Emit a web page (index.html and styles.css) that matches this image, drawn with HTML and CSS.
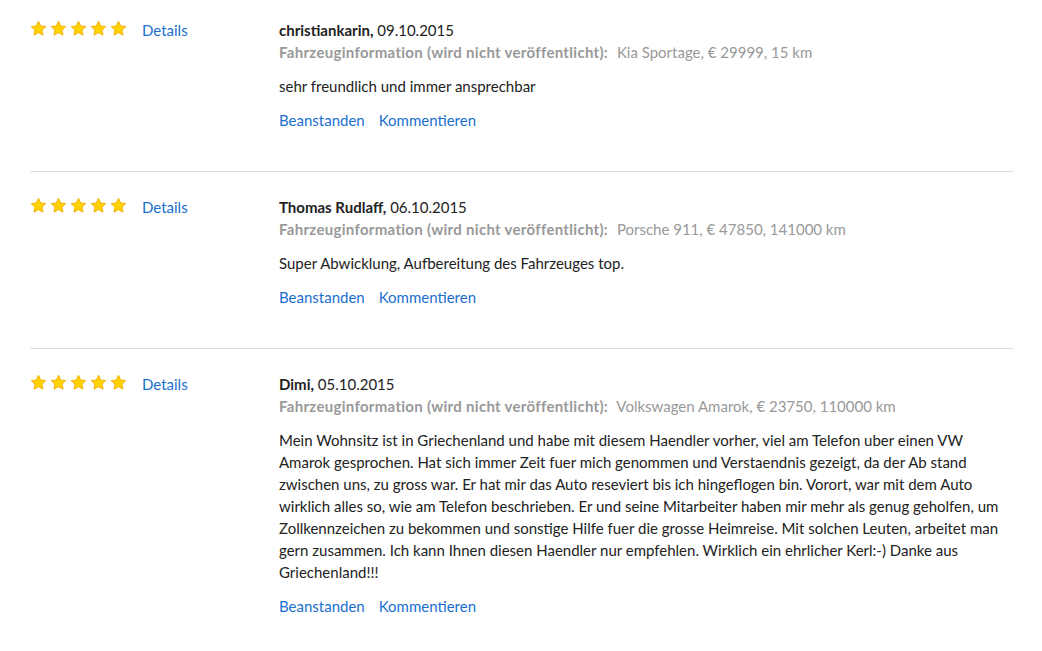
FILE: index.html
```html
<!DOCTYPE html>
<html>
<head>
  <title>Bewertungen</title>
  <meta charset="UTF-8">
  <link rel="stylesheet" href="styles.css">
</head>
<body>
  <svg width="0" height="0" class="defs">
    <symbol id="star" viewBox="0 0 24 24">
      <path d="M12 1.8l3.1 6.6 7.2.9-5.3 5 1.4 7.1L12 17.9l-6.4 3.5 1.4-7.1-5.3-5 7.2-.9z" fill="#ffd200" stroke="#f2a900" stroke-width="1.2" stroke-linejoin="round"/>
    </symbol>
  </svg>
  <div class="reviews">

    <div class="review">
      <div class="review-side">
        <div class="stars">
          <svg><use href="#star"/></svg><svg><use href="#star"/></svg><svg><use href="#star"/></svg><svg><use href="#star"/></svg><svg><use href="#star"/></svg>
        </div>
        <a href="#" class="details">Details</a>
      </div>
      <div class="review-body">
        <div class="author"><b>christiankarin,</b> 09.10.2015</div>
        <div class="vehicle"><b>Fahrzeuginformation (wird nicht veröffentlicht):</b> Kia Sportage, € 29999, 15 km</div>
        <p class="text">sehr freundlich und immer ansprechbar</p>
        <div class="actions"><a href="#">Beanstanden</a><a href="#">Kommentieren</a></div>
      </div>
    </div>

    <div class="review">
      <div class="review-side">
        <div class="stars">
          <svg><use href="#star"/></svg><svg><use href="#star"/></svg><svg><use href="#star"/></svg><svg><use href="#star"/></svg><svg><use href="#star"/></svg>
        </div>
        <a href="#" class="details">Details</a>
      </div>
      <div class="review-body">
        <div class="author"><b>Thomas Rudlaff,</b> 06.10.2015</div>
        <div class="vehicle"><b>Fahrzeuginformation (wird nicht veröffentlicht):</b> Porsche 911, € 47850, 141000 km</div>
        <p class="text">Super Abwicklung, Aufbereitung des Fahrzeuges top.</p>
        <div class="actions"><a href="#">Beanstanden</a><a href="#">Kommentieren</a></div>
      </div>
    </div>

    <div class="review">
      <div class="review-side">
        <div class="stars">
          <svg><use href="#star"/></svg><svg><use href="#star"/></svg><svg><use href="#star"/></svg><svg><use href="#star"/></svg><svg><use href="#star"/></svg>
        </div>
        <a href="#" class="details">Details</a>
      </div>
      <div class="review-body">
        <div class="author"><b>Dimi,</b> 05.10.2015</div>
        <div class="vehicle"><b>Fahrzeuginformation (wird nicht veröffentlicht):</b> Volkswagen Amarok, € 23750, 110000 km</div>
        <p class="text">Mein Wohnsitz ist in Griechenland und habe mit diesem Haendler vorher, viel am Telefon uber einen VW Amarok gesprochen. Hat sich immer Zeit fuer mich genommen und Verstaendnis gezeigt, da der Ab stand zwischen uns, zu gross war. Er hat mir das Auto reseviert bis ich hingeflogen bin. Vorort, war mit dem Auto wirklich alles so, wie am Telefon beschrieben. Er und seine Mitarbeiter haben mir mehr als genug geholfen, um Zollkennzeichen zu bekommen und sonstige Hilfe fuer die grosse Heimreise. Mit solchen Leuten, arbeitet man gern zusammen. Ich kann Ihnen diesen Haendler nur empfehlen. Wirklich ein ehrlicher Kerl:-) Danke aus Griechenland!!!</p>
        <div class="actions"><a href="#">Beanstanden</a><a href="#">Kommentieren</a></div>
      </div>
    </div>

  </div>
</body>
</html>
```

FILE: styles.css
```css
body {
  font-family: Lato, 'Liberation Sans', Arial, sans-serif;
  font-size: 15px;
  line-height: 22px;
  color: #222;
  background: #fff;
  margin: 0;
  padding: 0;
}
.defs {
  position: absolute;
}
.reviews {
  padding: 0 29px 0 30px;
}
.review {
  display: flex;
  padding: 24px 0 40px 0;
  border-bottom: 1px solid #dcdcdc;
}
.review:first-child {
  padding-top: 19px;
}
.review:last-child {
  border-bottom: none;
}
.review-side {
  width: 249px;
  flex-shrink: 0;
  display: flex;
  align-items: flex-start;
}
.stars {
  display: flex;
  gap: 3px;
  padding-top: 1px;
}
.stars svg {
  width: 17px;
  height: 17px;
}
a {
  color: #1a6fcf;
  text-decoration: none;
}
.details {
  margin-left: 15px;
}
.review-body {
  flex: 1;
}
.author b {
  font-weight: 700;
}
.vehicle {
  color: #999;
}
.vehicle b {
  letter-spacing: 0.3px;
  margin-right: 5px;
}
.text {
  margin: 12px 0;
}
.actions a {
  margin-right: 14px;
}
```
